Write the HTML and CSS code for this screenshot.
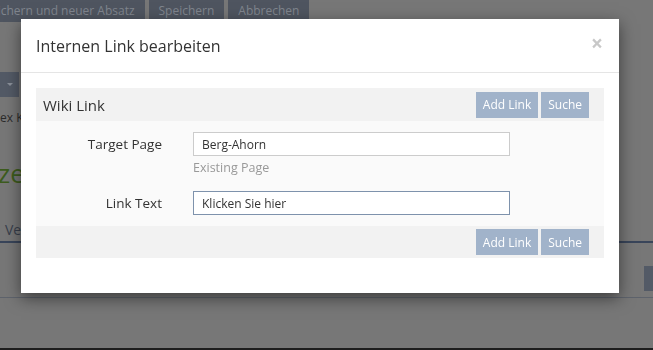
FILE: index.html
```html
<!DOCTYPE html>
<html lang="de">

<head>
    <meta charset="UTF-8">
    <meta name="viewport" content="width=device-width, initial-scale=1.0">
    <title>Internen Link bearbeiten</title>
    <link rel="stylesheet" href="styles.css">
</head>

<body>
    <div class="page">
        <div class="toolbar">
            <span class="tool-btn first">Speichern und neuer Absatz</span>
            <span class="tool-btn">Speichern</span>
            <span class="tool-btn">Abbrechen</span>
        </div>

        <div class="dropdown"><span class="caret"></span></div>
        <div class="crumb">Index Karte</div>
        <div class="headline">zeigen</div>

        <div class="tabs">
            <span class="tab">Versionen</span>
        </div>

        <div class="tools">
            <span class="tool-box"></span>
        </div>

        <div class="rule"></div>
        <div class="rule dark"></div>
    </div>

    <div class="modal">
        <header class="modal-header">
            <h4 class="modal-title">Internen Link bearbeiten</h4>
            <span class="close">&times;</span>
        </header>

        <div class="modal-body">
            <div class="panel-bar">
                <span class="panel-title">Wiki Link</span>
                <div class="actions">
                    <button class="btn">Add Link</button>
                    <button class="btn">Suche</button>
                </div>
            </div>

            <div class="form">
                <label class="form-label" for="target">Target Page</label>
                <div class="form-field">
                    <input class="input" id="target" type="text" value="Berg-Ahorn">
                    <div class="help">Existing Page</div>
                </div>

                <label class="form-label" for="linktext">Link Text</label>
                <div class="form-field">
                    <input class="input focused" id="linktext" type="text" value="Klicken Sie hier">
                </div>
            </div>

            <div class="panel-bar footer">
                <div class="actions">
                    <button class="btn">Add Link</button>
                    <button class="btn">Suche</button>
                </div>
            </div>
        </div>
    </div>
</body>

</html>
```

FILE: styles.css
```css
* {
    margin: 0;
    padding: 0;
    box-sizing: border-box;
}

body {
    font-family: 'Open Sans', 'Noto Sans', sans-serif;
    background: #777777;
    color: #333333;
    width: 653px;
    height: 350px;
    overflow: hidden;
}

/* dimmed page behind the dialog */

.page {
    height: 350px;
    display: flex;
    flex-direction: column;
}

.toolbar {
    display: flex;
    gap: 4px;
    height: 22px;
}

.tool-btn {
    background: #4f5560;
    color: #80858e;
    font-size: 12px;
    line-height: 22px;
    padding: 0 10px;
    white-space: nowrap;
}

.tool-btn.first {
    margin-left: -33px;
}

.dropdown {
    margin-top: 50px;
    width: 19px;
    height: 25px;
    background: #535a66;
    display: flex;
    align-items: center;
    justify-content: center;
}

.caret {
    border-left: 3px solid transparent;
    border-right: 3px solid transparent;
    border-top: 3px solid #8a9099;
}

.crumb {
    font-size: 12px;
    color: #2b2b2b;
    margin-top: 13px;
    margin-left: -18px;
    line-height: 16px;
    white-space: nowrap;
}

.headline {
    font-size: 26px;
    color: #3d5c1d;
    margin-top: 31px;
    margin-left: -2px;
    line-height: 32px;
}

.tabs {
    margin-top: 31px;
    display: flex;
    border-bottom: 2px solid #39455a;
    height: 23px;
}

.tab {
    font-size: 14px;
    color: #39404c;
    padding-left: 5px;
    line-height: 20px;
}

.tools {
    margin-top: 23px;
    display: flex;
    justify-content: flex-end;
}

.tool-box {
    width: 9px;
    height: 25px;
    background: #535a66;
}

.rule {
    margin-top: 6px;
    border-top: 1px solid #5e636c;
}

.rule.dark {
    margin-top: 50px;
    border-top: 2px solid #1e1e1e;
}

/* dialog */

.modal {
    position: fixed;
    left: 21px;
    top: 19px;
    width: 598px;
    height: 274px;
    background: #ffffff;
    box-shadow: 0 5px 15px rgba(0, 0, 0, 0.5);
}

.modal-header {
    display: flex;
    align-items: center;
    justify-content: space-between;
    padding: 15px 16px 15px 15px;
    border-bottom: 1px solid #e5e5e5;
    height: 54px;
}

.modal-title {
    font-size: 16px;
    font-weight: 400;
    line-height: 22px;
    color: #333333;
}

.close {
    font-size: 21px;
    font-weight: 700;
    line-height: 1;
    color: #c8c8c8;
    margin-top: -4px;
}

.modal-body {
    padding: 15px;
}

.panel-bar {
    display: flex;
    align-items: center;
    justify-content: space-between;
    background: #f2f2f2;
    height: 33px;
    padding: 0 15px 0 7px;
}

.panel-bar.footer {
    justify-content: flex-end;
    height: 32px;
}

.panel-title {
    font-size: 15px;
    color: #333333;
}

.actions {
    display: flex;
    gap: 3px;
}

.btn {
    font-family: inherit;
    font-size: 12px;
    color: #ffffff;
    background: #a1b3ca;
    border: none;
    height: 26px;
    padding: 0 7px;
}

.form {
    background: #fafafa;
    display: grid;
    grid-template-columns: 126px 317px;
    column-gap: 31px;
    row-gap: 15px;
    padding: 11px 0;
}

.form-label {
    font-size: 13.5px;
    text-align: right;
    line-height: 24px;
    color: #333333;
}

.input {
    display: block;
    width: 100%;
    height: 24px;
    border: 1px solid #cccccc;
    background: #ffffff;
    padding: 0 8px;
    font-family: inherit;
    font-size: 12px;
    color: #333333;
    outline: none;
}

.input.focused {
    border-color: #7e92ac;
}

.help {
    font-size: 12.5px;
    color: #999999;
    line-height: 17px;
    margin-top: 3px;
}
```
